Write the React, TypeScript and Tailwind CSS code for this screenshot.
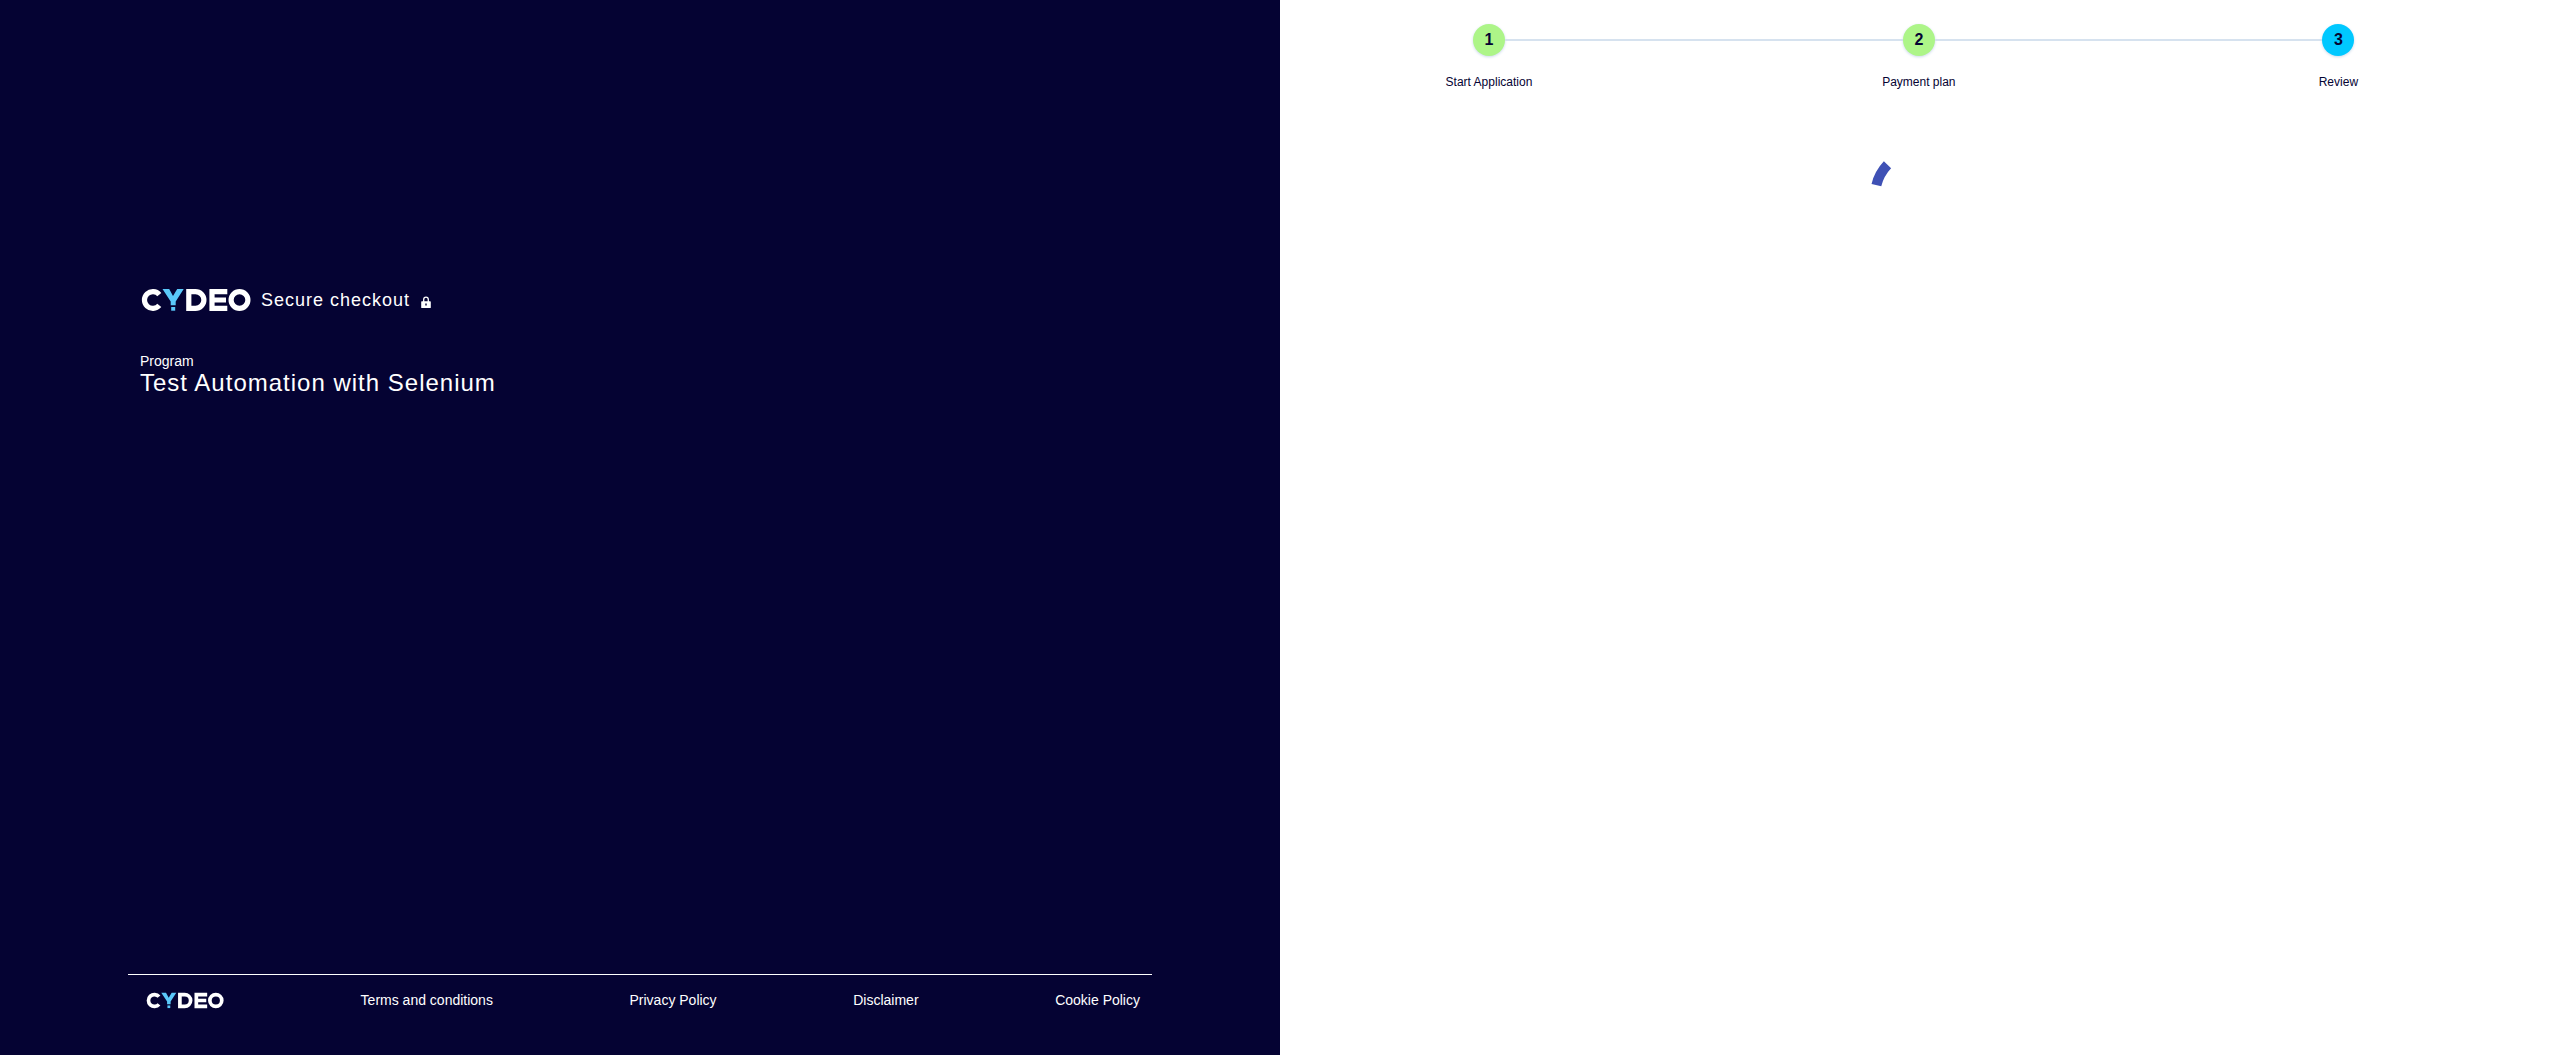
import React from "react";

const steps = [
  { number: 1, label: "Start Application", done: true },
  { number: 2, label: "Payment plan", done: true },
  { number: 3, label: "Review", done: false },
];

const links = ["Terms and conditions", "Privacy Policy", "Disclaimer", "Cookie Policy"];

function Logo({ className }: { className: string }) {
  return (
    <svg viewBox="0 0 110 24" className={className} role="img" aria-label="Cydeo">
      <g fill="none" stroke="#fff" strokeWidth="5.200">
        <path d="M18.300 17.400A8.400 8.400 0 1 1 18.300 6.600" />
        <path d="M47.800 3.600H54.500A8.400 8.400 0 0 1 54.500 20.400H47.800Z" />
        <path d="M86.300 3.600H71V20.400H86.300M71 12H85" />
        <circle cx="98.500" cy="12" r="8.400" />
      </g>
      <path d="M21.500 1H28.200L32 8L36.200 1H42.700L34.700 13.500V17.200H29.700V13.500Z" fill="#5ac8fa" />
      <path d="M30.200 19H34.200V22.700H30.200Z" fill="#5ac8fa" />
    </svg>
  );
}

function Lock() {
  return (
    <svg viewBox="0 0 10 12" className="h-3 w-2.5" aria-hidden="true">
      <path d="M2.700 6V3.500a2.300 2.300 0 0 1 4.600 0V6" fill="none" stroke="#fff" strokeWidth="1.300" />
      <path d="M.8 5.300H9.200a.6.6 0 0 1 .6.6V11.400a.6.6 0 0 1-.6.6H.8a.6.6 0 0 1-.6-.6V5.900A.6.6 0 0 1 .8 5.300Z" fill="#fff" />
      <path d="M4.300 7.400h1.400v2.200h-1.400Z" fill="#050333" />
    </svg>
  );
}

export default function App() {
  return (
    <div className="grid min-h-screen grid-cols-2 bg-white font-['Liberation_Sans',Arial,sans-serif]">
      <aside className="flex flex-col justify-between bg-[#050333] px-[10%] text-white">
        <header className="px-3 pt-[286px]">
          <div className="flex items-center">
            <Logo className="h-6 w-[112px]" />
            <span className="ml-[9px] text-lg leading-7 tracking-[1px]">Secure checkout</span>
            <span className="ml-[11px] pt-1">
              <Lock />
            </span>
          </div>
          <p className="mt-[37px] text-sm leading-5">Program</p>
          <h1 className="text-2xl leading-6 tracking-[1px]">Test Automation with Selenium</h1>
        </header>
        <footer className="mb-[45px] flex items-center justify-between border-t border-white px-3 pt-[15px]">
          <a href="#home" className="ml-1.5">
            <Logo className="h-[17px] w-[78px]" />
          </a>
          {links.map((link) => (
            <a key={link} href="#legal" className="text-sm leading-5">
              {link}
            </a>
          ))}
        </footer>
      </aside>
      <main>
        <ol className="flex pt-6 pr-[13.8%] pl-[12%]">
          {steps.map((step, i) => (
            <React.Fragment key={step.number}>
              {i > 0 && <li aria-hidden="true" className="mt-[15px] h-0.5 flex-1 bg-[#d6e2ef]" />}
              <li className="flex min-w-[90px] flex-col text-[#050333]">
                <div className="flex items-center">
                  <span className={i > 0 ? "h-0.5 flex-1 bg-[#d6e2ef]" : "flex-1"} />
                  <span
                    className={`flex size-8 items-center justify-center rounded-full text-base font-bold shadow-[0_1px_3px_#cbd9ea] ${step.done ? "bg-[#adf588]" : "bg-[#00c8ff]"}`}
                  >
                    {step.number}
                  </span>
                  <span className={i < steps.length - 1 ? "h-0.5 flex-1 bg-[#d6e2ef]" : "flex-1"} />
                </div>
                <span className="mt-4 px-3 text-center text-xs leading-5 whitespace-nowrap">{step.label}</span>
              </li>
            </React.Fragment>
          ))}
        </ol>
        <div role="status" aria-label="Loading" className="mt-[54px] flex justify-center">
          <svg viewBox="0 0 100 100" className="size-[100px]">
            <path d="M6.400 39.100A45 45 0 0 1 17.500 18.800" fill="none" stroke="#3f51b5" strokeWidth="10" />
          </svg>
        </div>
      </main>
    </div>
  );
}
